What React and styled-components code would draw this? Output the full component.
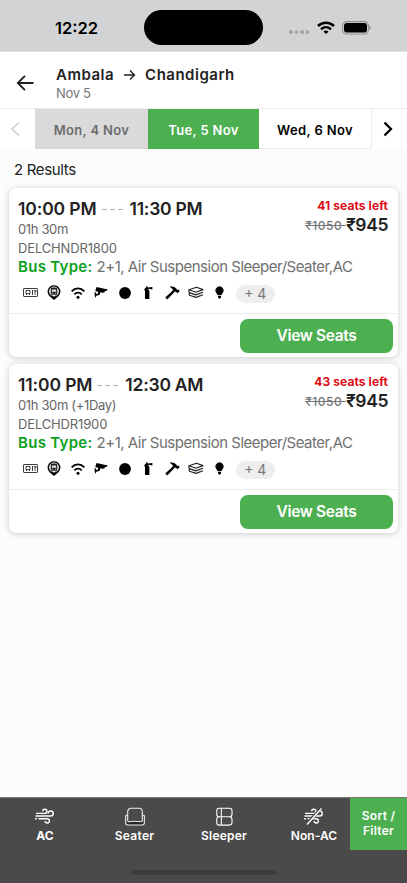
import React from "react";
import styled, { createGlobalStyle } from "styled-components";

const Global = createGlobalStyle`
  * { box-sizing: border-box; }
  body { margin: 0; background: #fcfcfc; font-family: Inter, "Liberation Sans", sans-serif; }
  svg { display: block; flex: none; }
`;

const Screen = styled.div`
  width: 407px;
  height: 883px;
  display: flex;
  flex-direction: column;
  background: #fcfcfc;
  overflow: hidden;
`;

const Text = styled.span`
  display: block;
  white-space: nowrap;
  font-size: ${(p) => p.$size}px;
  line-height: ${(p) => p.$line || 18}px;
  font-weight: ${(p) => p.$weight || 400};
  letter-spacing: ${(p) => p.$track || 0}px;
  color: ${(p) => p.$color || "#222"};
`;

const StatusBar = styled.div`
  height: 52px;
  flex: none;
  display: grid;
  grid-template-columns: 144px 119px 1fr;
  align-items: center;
  background: #d2d3d5;
  padding-top: 4px;
  border-bottom: 1px solid #e2e2e3;
`;
const Clock = styled.div`
  padding-left: 55px;
`;
const Island = styled.div`
  height: 35px;
  border-radius: 18px;
  background: #000;
`;
const StatusIcons = styled.div`
  display: flex;
  align-items: center;
  gap: 7.5px;
  padding-left: 26px;
`;
const Dots = styled.div`
  display: flex;
  gap: 2px;
  margin-top: 9px;
`;
const Dot = styled.i`
  width: 3.6px;
  height: 3.6px;
  border-radius: 50%;
  background: #a3a4a6;
`;

const Header = styled.header`
  height: 57px;
  flex: none;
  display: flex;
  background: #fff;
  border-bottom: 1px solid #ececec;
  padding: 14px 0 0 16px;
`;
const BackSlot = styled.div`
  width: 40px;
  padding-top: 8px;
`;
const Route = styled.div`
  display: flex;
  align-items: center;
  height: 18px;
`;
const RouteArrow = styled.div`
  width: 31px;
  padding-left: 10px;
`;

const DateBar = styled.nav`
  height: 40px;
  flex: none;
  display: grid;
  grid-template-columns: 35px 113px 111px 113px 35px;
  background: #fff;
`;
const DateCell = styled.div`
  display: flex;
  align-items: center;
  justify-content: center;
  padding-top: 2px;
  background: ${(p) => p.$bg || "#fff"};
  border: solid #ededed;
  border-width: ${(p) => (p.$bg ? "0" : "0 1px 1px 0")};
`;
const Chevron = styled.div`
  display: flex;
  align-items: center;
  justify-content: center;
  padding-right: ${(p) => p.$shift || 0}px;
`;

const Main = styled.main`
  flex: 1;
  padding: 12px 9px 0;
`;
const ResultCount = styled.div`
  padding-left: 5px;
  height: 27px;
`;
const Card = styled.article`
  height: 169px;
  margin-bottom: 7px;
  display: flex;
  flex-direction: column;
  border-radius: 7px;
  background: #fff;
  box-shadow: 0 1px 6px rgba(0, 0, 0, 0.2);
`;
const CardBody = styled.div`
  height: 126px;
  display: flex;
  justify-content: space-between;
  padding: 11px 10px 0 9px;
  border-bottom: 1px solid #ececec;
`;
const Details = styled.div`
  width: 270px;
`;
const TimeRow = styled.div`
  display: flex;
  height: 22px;
  align-items: center;
  padding-bottom: 2px;
`;
const Dashes = styled.div`
  display: flex;
  gap: 3px;
  margin: 0 7px 0 5px;
`;
const Dash = styled.i`
  width: 5px;
  height: 1px;
  background: #b0b0b0;
`;
const TypeRow = styled.div`
  display: flex;
  gap: 4px;
`;
const Amenities = styled.div`
  display: flex;
  align-items: center;
  height: 18px;
  margin-top: 8px;
`;
const AmenityIcon = styled.div`
  width: 23.65px;
  height: 18px;
  display: flex;
  align-items: center;
  justify-content: center;
  padding: 0 0 2px 1px;
`;
const More = styled.div`
  width: 39px;
  height: 18px;
  margin-left: 5px;
  flex: none;
  display: flex;
  justify-content: center;
  align-items: center;
  border-radius: 9px;
  background: #eee;
`;
const Prices = styled.div`
  display: flex;
  flex-direction: column;
  align-items: flex-end;
`;
const PriceRow = styled.div`
  display: flex;
  align-items: center;
`;
const OldPrice = styled(Text)`
  text-decoration: line-through;
  white-space: pre;
  padding-top: 2px;
`;
const CardFooter = styled.div`
  flex: 1;
  display: flex;
  justify-content: flex-end;
  padding: 4.5px 5px 0 0;
`;
const ViewButton = styled.button`
  width: 153px;
  height: 34px;
  border: 0;
  border-radius: 8px;
  padding: 0;
  display: flex;
  align-items: center;
  justify-content: center;
  background: #4caf50;
  font-family: inherit;
`;

const BottomBar = styled.footer`
  height: 86px;
  flex: none;
  display: flex;
  flex-direction: column;
  align-items: center;
  background: #4a4a4a;
  border-top: 1px solid #777;
`;
const Filters = styled.div`
  width: 407px;
  height: 72px;
  display: grid;
  grid-template-columns: 90px 89px 90px 81px 57px;
`;
const FilterItem = styled.div`
  display: flex;
  flex-direction: column;
  align-items: center;
  padding-top: 9px;
  padding-left: ${(p) => p.$left || 0}px;
`;
const SortButton = styled.div`
  height: 52px;
  padding-top: 10px;
  background: #4caf50;
  display: flex;
  flex-direction: column;
  align-items: center;
`;
const HomeIndicator = styled.div`
  width: 145px;
  height: 5px;
  border-radius: 3px;
  background: #3c3c3c;
`;

const WifiIcon = () => (
  <svg width="18" height="14" viewBox="0 0 18 14" fill="none" stroke="#000" strokeWidth="2.5">
    <path d="M1 5C5.5.5 12.5.5 17 5" />
    <path d="M4 8.3c3-2.8 7-2.8 10 0" />
    <path d="M6.4 10.4c1.6-1.3 3.6-1.3 5.2 0L9 13z" fill="#000" stroke="none" />
  </svg>
);
const BatteryIcon = () => (
  <svg width="29" height="14" viewBox="0 0 29 14">
    <rect x=".6" y=".6" width="25.8" height="12.4" rx="4" fill="none" stroke="#8e8f91" strokeWidth="1.1" />
    <rect x="2" y="2" width="23" height="9.6" rx="2.8" />
    <path d="M27.4 4.6c1.8.5 1.8 3.9 0 4.4z" fill="#8e8f91" />
  </svg>
);
const BackIcon = () => (
  <svg width="18" height="18" viewBox="0 0 18 18" fill="none" stroke="#222" strokeWidth="1.9">
    <path d="M17.5 9H2M9 1.8 1.8 9 9 16.2" />
  </svg>
);
const RightArrow = () => (
  <svg width="12" height="12" viewBox="0 0 12 12" fill="none" stroke="#222" strokeWidth="1.4">
    <path d="M0 6h10.5M6 1.5 10.5 6 6 10.5" />
  </svg>
);
const ChevronIcon = ({ left }) => (
  <svg width="10" height="16" viewBox="0 0 10 16" fill="none" stroke={left ? "#d0d0d0" : "#000"} strokeWidth={left ? 1.7 : 2.3}>
    <path d={left ? "M9 1.5 2 8l7 6.5" : "M1.5 1.5 8 8l-6.5 6.5"} />
  </svg>
);

const TicketIcon = () => (
  <svg width="15" height="9" viewBox="0 0 15 9" fill="none" stroke="#222" strokeWidth=".9">
    <rect x=".5" y=".5" width="14" height="8" rx=".6" />
    <path d="M3 2.5h4v3.2H3zM3 6.5h1M6 6.5h1M9.5 2v5M11.2 2.5h1.8v1.5h-1.8M11.2 6h1.8" />
  </svg>
);
const TrackIcon = () => (
  <svg width="14" height="15" viewBox="0 0 14 15">
    <path d="M7 .2a6.4 6.4 0 0 1 4.4 11L7 14.9 2.6 11.2A6.4 6.4 0 0 1 7 .2z" />
    <circle cx="7" cy="6.5" r="4.9" fill="#e8e8e8" />
    <path d="M3.8 4.2C3.8 3 5 2.6 7 2.6s3.2.4 3.2 1.6v5.3H9.4v.9H8.3v-.9H5.7v.9H4.6v-.9h-.8z" fill="#222" />
    <path d="M4.9 4.5h4.2v2.3H4.9z" fill="#ddd" />
    <path d="M4.9 8.2h1M8.1 8.2h1" stroke="#fff" strokeWidth=".8" />
  </svg>
);
const SignalIcon = () => (
  <svg width="14" height="12" viewBox="0 0 14 12" fill="none" stroke="#000" strokeWidth="1.8">
    <path d="M.6 4.3C4.2.5 9.8.5 13.4 4.3" />
    <path d="M3.3 7.3c2.2-2.2 5.2-2.2 7.4 0" />
    <circle cx="7" cy="10.2" r="1.5" fill="#000" stroke="none" />
  </svg>
);
const CameraIcon = () => (
  <svg width="14" height="13" viewBox="0 0 14 13">
    <path d="M2.6 1 13.7 3.4 12.9 4.8 11.2 5 10.3 6.5 8.9 6.8 6.6 6.3 5.3 8.9 2.8 9.4 1.1 11.7.4 6.3 1.6 6.2 2.2 8 3.8 7.5 4.2 5.7 1.2 4.9z" />
  </svg>
);
const DiscIcon = () => (
  <svg width="12" height="12" viewBox="0 0 12 12"><circle cx="6" cy="6" r="5.9" /></svg>
);
const ExtinguisherIcon = () => (
  <svg width="11" height="14" viewBox="0 0 11 14">
    <path d="M1.8 4.8 1.3 2.9 3 1.6V.6h1.7v1l4.7-.7v2.5L5.4 2.8v1l1 1.2V13H2V5z" />
  </svg>
);
const HammerIcon = () => (
  <svg width="15" height="14" viewBox="0 0 15 14">
    <path d="M4.5.8C7.5.1 9.7.9 11.2 2.6l1.1 1.4 1-.6L14.8 5.1l-2.3 2.1-1.6-1.5-1-.1L2.3 13.4.3 11.6 8 4.2C7.3 2.3 6 1.8 4.5.8z" />
  </svg>
);
const LayersIcon = () => (
  <svg width="16" height="13" viewBox="0 0 16 13" fill="none" stroke="#222" strokeWidth="1.2" strokeLinejoin="round">
    <path d="M1 3.8 8.5 1.2 15 3.6 8 6.2zM1 4.4c-.6 1.5 0 2.2 1 2.5l5.8 2L15 6.3M1.5 7.2c-.8 1.3-.2 2 .7 2.3L8 11.4l7-2.6" />
  </svg>
);
const BulbIcon = () => (
  <svg width="9" height="13" viewBox="0 0 9 13">
    <path d="M4.5.3A4.2 4.2 0 0 1 7.7 7.1L6.3 9.3H2.7L1.3 7.1A4.2 4.2 0 0 1 4.5.3zM3 9.9h3v1.3L5.3 12.5H3.7L3 11.2z" />
  </svg>
);
const WindIcon = ({ off }) => (
  <svg width="20" height="20" viewBox="0 0 20 20" fill="none" stroke="#fff" strokeWidth="1.4">
    <path d="M1 6.4h8.8a2.1 2.1 0 1 0-2.1-2.1M.5 9h15.2a2.5 2.5 0 1 0-2.5-2.5M3.5 11.8h8.8a2.1 2.1 0 1 1-2.1 2.2M0 11.8h1.8" />
    {off && <path d="M16.5 2 2 17.5" stroke="#4a4a4a" strokeWidth="3" />}
    {off && <path d="M17.5 1.5 3 17.5" />}
  </svg>
);
const SeatIcon = () => (
  <svg width="20" height="20" viewBox="0 0 20 20" fill="none" stroke="#eee" strokeWidth="1.1">
    <path d="M1.5 14.5h17v2.5q0 1-1 1h-15q-1 0-1-1z" fill="#222" stroke="none" />
    <path d="M2.7 8V4.5a3.2 3.2 0 0 1 3.2-3.2h8.2a3.2 3.2 0 0 1 3.2 3.2V13.500q0 1.600-1.800 1.200-5.500-1-11 0Q2.700 15.100 2.700 13.500z" fill="#4a4a4a" />
    <path d="M2.700 8.200H1.300q-.7 0-.7.8v6.500a2.500 2.500 0 0 0 2.500 2.500h13.800a2.500 2.500 0 0 0 2.500-2.500V9q0-.8-.7-.8h-1.400" />
  </svg>
);
const BerthIcon = () => (
  <svg width="17" height="20" viewBox="0 0 17 20" fill="none" stroke="#fff" strokeWidth="1.1">
    <path d="M3 1.3h10.5a2.5 2.5 0 0 1 2.5 2.5v3.4a2.5 2.5 0 0 1-2.5 2.5H3A2.3 2.3 0 0 1 .8 7.4V3.6A2.3 2.3 0 0 1 3 1.3zM3 9.7h10.5a2.5 2.5 0 0 1 2.5 2.5v3.4a2.5 2.5 0 0 1-2.5 2.5H3a2.3 2.3 0 0 1-2.2-2.3v-3.8A2.3 2.3 0 0 1 3 9.7zM5.3 1.3v16.800" />
  </svg>
);

const amenityIcons = [TicketIcon, TrackIcon, SignalIcon, CameraIcon, DiscIcon, ExtinguisherIcon, HammerIcon, LayersIcon, BulbIcon];

const trips = [
  { from: "10:00 PM", to: "11:30 PM", duration: "01h 30m", code: "DELCHNDR1800", seats: "41 seats left" },
  { from: "11:00 PM", to: "12:30 AM", duration: "01h 30m (+1Day)", code: "DELCHDR1900", seats: "43 seats left" },
];

const TripCard = ({ trip }) => (
  <Card>
    <CardBody>
      <Details>
        <TimeRow>
          <Text $size={17.5} $weight={600} $line={20} $track={-0.12}>{trip.from}</Text>
          <Dashes><Dash /><Dash /><Dash /></Dashes>
          <Text $size={17.5} $weight={600} $line={20} $track={-0.25}>{trip.to}</Text>
        </TimeRow>
        <Text $size={13} $line={17.5} $color="#666" $track={-0.35}>{trip.duration}</Text>
        <Text $size={13} $color="#666" $track={-0.15}>{trip.code}</Text>
        <TypeRow>
          <Text $size={15} $line={20} $weight={600} $color="#0a9f20" $track={0.3}>Bus Type:</Text>
          <Text $size={15} $line={20} $color="#707070" $track={-0.49}>2+1, Air Suspension Sleeper/Seater,AC</Text>
        </TypeRow>
        <Amenities>
          {amenityIcons.map((Icon, i) => <AmenityIcon key={i}><Icon /></AmenityIcon>)}
          <More><Text $size={14} $color="#777">+ 4</Text></More>
        </Amenities>
      </Details>
      <Prices>
        <Text $size={12} $line={14} $weight={650} $color="#e00b12" $track={0.08}>{trip.seats}</Text>
        <PriceRow>
          <OldPrice $size={12} $weight={500} $color="#777" $track={0.5}>{"₹1050 "}</OldPrice>
          <Text $size={17.5} $line={24} $weight={600} $track={-0.4}>₹945</Text>
        </PriceRow>
      </Prices>
    </CardBody>
    <CardFooter>
      <ViewButton><Text $size={15.5} $weight={600} $color="#fff" $track={-0.35}>View Seats</Text></ViewButton>
    </CardFooter>
  </Card>
);

export default function App() {
  return (
    <Screen>
      <Global />
      <StatusBar>
        <Clock><Text $size={16.5} $weight={600} $color="#000">12:22</Text></Clock>
        <Island />
        <StatusIcons>
          <Dots><Dot /><Dot /><Dot /><Dot /></Dots>
          <WifiIcon />
          <BatteryIcon />
        </StatusIcons>
      </StatusBar>
      <Header>
        <BackSlot><BackIcon /></BackSlot>
        <div>
          <Route>
            <Text $size={15} $weight={600} $track={0.5}>Ambala</Text>
            <RouteArrow><RightArrow /></RouteArrow>
            <Text $size={15} $weight={600} $track={0.5}>Chandigarh</Text>
          </Route>
          <Text $size={13} $color="#777" $track={-0.35}>Nov 5</Text>
        </div>
      </Header>
      <DateBar>
        <Chevron $shift={6}><ChevronIcon left /></Chevron>
        <DateCell $bg="#dadada"><Text $size={13} $weight={600} $color="#6d6d6d" $track={0.35}>Mon, 4 Nov</Text></DateCell>
        <DateCell $bg="#4caf50"><Text $size={13} $weight={600} $color="#fff" $track={0.35}>Tue, 5 Nov</Text></DateCell>
        <DateCell><Text $size={13} $weight={600} $color="#000" $track={0.35}>Wed, 6 Nov</Text></DateCell>
        <Chevron $shift={4}><ChevronIcon /></Chevron>
      </DateBar>
      <Main>
        <ResultCount><Text $size={15} $line={17} $track={-0.35}>2 Results</Text></ResultCount>
        {trips.map((trip) => <TripCard key={trip.code} trip={trip} />)}
      </Main>
      <BottomBar>
        <Filters>
          <FilterItem><WindIcon /><Text $size={12} $weight={650} $color="#fff">AC</Text></FilterItem>
          <FilterItem><SeatIcon /><Text $size={12} $weight={600} $color="#fff" $track={0.3}>Seater</Text></FilterItem>
          <FilterItem><BerthIcon /><Text $size={12} $weight={600} $color="#fff" $track={0.2}>Sleeper</Text></FilterItem>
          <FilterItem $left={9}><WindIcon off /><Text $size={12} $weight={600} $color="#fff" $track={0.1}>Non-AC</Text></FilterItem>
          <SortButton>
            <Text $size={12} $line={15} $weight={600} $color="#fff" $track={0.25}>Sort /</Text>
            <Text $size={12} $line={15} $weight={600} $color="#fff" $track={0.25}>Filter</Text>
          </SortButton>
        </Filters>
        <HomeIndicator />
      </BottomBar>
    </Screen>
  );
}
